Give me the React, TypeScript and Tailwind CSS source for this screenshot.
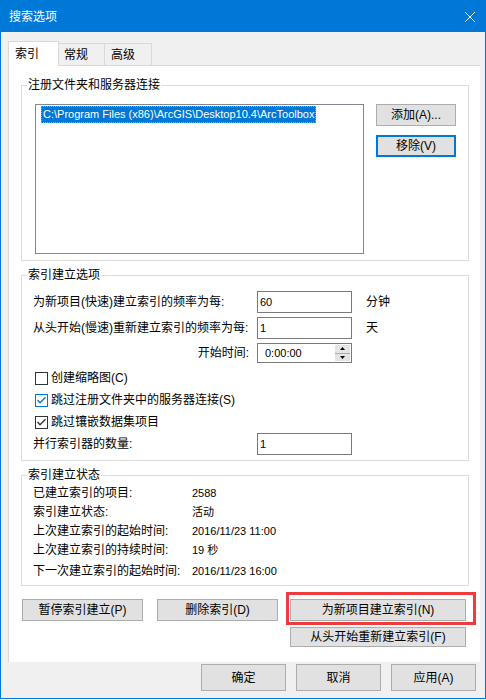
import type { ReactNode } from "react";

const FONT = "font-[family-name:'Liberation_Sans','Noto_Sans_CJK_SC',sans-serif]";

function Btn({ children, className = "", focused = false }: { children: ReactNode; className?: string; focused?: boolean }) {
  return (
    <div
      className={`flex items-center justify-center bg-[#e1e1e1] text-[12px] leading-[16px] text-black ${
        focused ? "border-2 border-[#0078d7]" : "border border-[#adadad]"
      } ${className}`}
    >
      {children}
    </div>
  );
}

function Group({ title, className = "", children }: { title: string; className?: string; children: ReactNode }) {
  return (
    <div className={`relative border border-[#dcdcdc] ${className}`}>
      <span className="absolute -top-[9px] left-[5px] bg-white px-[1px] text-[12px] leading-[16px]">{title}</span>
      {children}
    </div>
  );
}

function Field({ label, value, unit, className = "" }: { label: string; value: string; unit?: string; className?: string }) {
  return (
    <div className={`flex h-[22px] items-center ${className}`}>
      <span className="w-[224px] whitespace-nowrap">{label}</span>
      <div className="flex h-[22px] w-[95px] items-center border border-[#7a7a7a] bg-white pl-[2px] text-[11px]">{value}</div>
      {unit && <span className="ml-[14px]">{unit}</span>}
    </div>
  );
}

function Check({ label, checked = false, focus = false }: { label: string; checked?: boolean; focus?: boolean }) {
  return (
    <div className="flex h-[22px] items-center pl-[2px]">
      <span
        className={`flex h-[13px] w-[13px] items-center justify-center border bg-white ${
          focus ? "border-[#0078d7]" : "border-[#333333]"
        }`}
      >
        {checked && (
          <svg width="11" height="11" viewBox="0 0 11 11">
            <path d="M1.5 5 L4 7.8 L9.5 2.2" fill="none" stroke={focus ? "#0078d7" : "#333333"} strokeWidth="1.3" />
          </svg>
        )}
      </span>
      <span className="ml-[3px] whitespace-nowrap">{label}</span>
    </div>
  );
}

function Spin() {
  return (
    <div className="flex h-[16px] w-[15px] flex-col bg-[#e5e5e5]">
      <div className="flex flex-1 items-center justify-center border-b border-[#adadad]">
        <svg width="5" height="3" viewBox="0 0 5 3">
          <path d="M0 3 L2.5 0 L5 3 Z" fill="#000" />
        </svg>
      </div>
      <div className="flex flex-1 items-center justify-center">
        <svg width="5" height="3" viewBox="0 0 5 3">
          <path d="M0 0 L2.5 3 L5 0 Z" fill="#000" />
        </svg>
      </div>
    </div>
  );
}

const status = [
  ["已建立索引的项目:", "2588"],
  ["索引建立状态:", "活动"],
  ["上次建立索引的起始时间:", "2016/11/23 11:00"],
  ["上次建立索引的持续时间:", "19 秒"],
];

export default function App() {
  return (
    <div className={`flex h-[699px] w-[486px] flex-col border border-[#0078d7] bg-[#f0f0f0] text-[12px] leading-[16px] text-black ${FONT}`}>
      {/* title bar */}
      <div className="flex h-[31px] shrink-0 items-center justify-between bg-[#0078d7] pl-[8px] pr-[10px] text-white">
        <span>搜索选项</span>
        <svg width="10" height="10" viewBox="0 0 10 10">
          <path d="M0 0 L10 10 M10 0 L0 10" stroke="#fff" strokeWidth="1" />
        </svg>
      </div>

      <div className="pl-[7px] pt-[9px]">
        {/* tabs */}
        <div className="flex h-[24px] items-end">
          <div className="relative z-10 -mb-px flex h-[25px] w-[51px] items-start border-x border-t border-[#d9d9d9] bg-white pl-[6px] pt-[4px]">
            索引
          </div>
          <div className="flex h-[22px] w-[46px] items-center border-r border-t border-[#d9d9d9] pl-[5px]">常规</div>
          <div className="flex h-[22px] w-[47px] items-center border-r border-t border-[#d9d9d9] pl-[6px]">高级</div>
        </div>

        {/* panel */}
        <div className="h-[597px] w-[472px] border-l border-t border-[#d9d9d9] bg-white pl-[12px] pr-[11px]">
          <Group title="注册文件夹和服务器连接" className="mt-[19px]">
            <div className="flex pb-[6px] pl-[13px] pt-[18px]">
              <div className="h-[150px] w-[329px] border border-[#828790] bg-white pl-[5px] pt-[1px]">
                <div className="h-[17px] w-[275px] whitespace-nowrap border border-dotted border-[#e39b4a] bg-[#0078d7] pl-[1px] text-[11px] leading-[15px] text-white">
                  {"C:\\Program Files (x86)\\ArcGIS\\Desktop10.4\\ArcToolbox"}
                </div>
              </div>
              <div className="ml-[12px] flex flex-col gap-[9px]">
                <Btn className="h-[22px] w-[80px]">添加(A)...</Btn>
                <Btn className="h-[22px] w-[80px]" focused>
                  移除(V)
                </Btn>
              </div>
            </div>
          </Group>

          <Group title="索引建立选项" className="mt-[14px]">
            <div className="pb-[5px] pl-[11px] pt-[15px]">
              <Field label="为新项目(快速)建立索引的频率为每:" value="60" unit="分钟" />
              <Field className="mt-[4px]" label="从头开始(慢速)重新建立索引的频率为每:" value="1" unit="天" />
              <div className="mt-[4px] flex h-[20px] items-center">
                <span className="w-[224px] pr-[8px] text-right">开始时间:</span>
                <div className="flex h-[20px] w-[95px] items-center border border-[#7a7a7a] bg-white pl-[7px] pr-[1px]">
                  <span className="flex-1 text-[11px]">0:00:00</span>
                  <Spin />
                </div>
              </div>
              <div className="mt-[4px]">
                <Check label="创建缩略图(C)" />
                <Check label="跳过注册文件夹中的服务器连接(S)" checked focus />
                <Check label="跳过镶嵌数据集项目" checked />
              </div>
              <Field label="并行索引器的数量:" value="1" />
            </div>
          </Group>

          <Group title="索引建立状态" className="mt-[14px]">
            <div className="pb-[5px] pl-[11px] pt-[7px]">
              {status.map(([k, v]) => (
                <div key={k} className="flex h-[19px] items-center">
                  <span className="w-[159px]">{k}</span>
                  <span className="text-[11px]">{v}</span>
                </div>
              ))}
              <div className="mt-[2px] flex h-[19px] items-center">
                <span className="w-[159px]">下一次建立索引的起始时间:</span>
                <span className="text-[11px]">2016/11/23 16:00</span>
              </div>
            </div>
          </Group>

          <div className="mt-[13px] flex items-start pl-[1px]">
            <Btn className="h-[22px] w-[121px]">暂停索引建立(P)</Btn>
            <Btn className="ml-[14px] h-[22px] w-[121px]">删除索引(D)</Btn>
            <div className="ml-[12px] flex flex-col gap-[6px]">
              <div className="relative">
                <Btn className="h-[22px] w-[176px]">为新项目建立索引(N)</Btn>
                <div className="pointer-events-none absolute -bottom-[4px] -left-[4px] -right-[10px] -top-[7px] border-[3px] border-[#ef3b3b]" />
              </div>
              <Btn className="h-[20px] w-[176px]">从头开始重新建立索引(F)</Btn>
            </div>
          </div>
        </div>
      </div>

      {/* footer */}
      <div className="mt-[2px] flex justify-end gap-[10px] pr-[9px]">
        <Btn className="h-[27px] w-[85px]">确定</Btn>
        <Btn className="h-[27px] w-[85px]">取消</Btn>
        <Btn className="h-[27px] w-[85px]">应用(A)</Btn>
      </div>
    </div>
  );
}
